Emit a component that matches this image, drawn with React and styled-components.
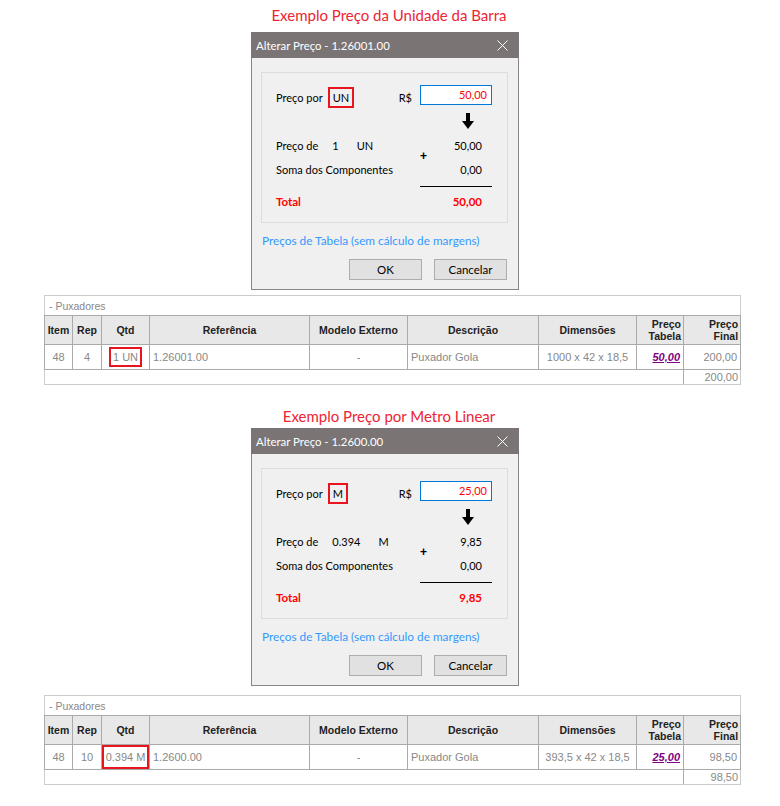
import React from "react";
import styled, { createGlobalStyle } from "styled-components";

const GlobalStyle = createGlobalStyle`
  html, body {
    margin: 0;
    padding: 0;
    background: #ffffff;
  }
  body {
    width: 780px;
    font-family: Lato, "Liberation Sans", sans-serif;
  }
`;

const examples = [
  {
    title: "Exemplo Preço da Unidade da Barra",
    code: "1.26001.00",
    unit: "UN",
    price: "50,00",
    qty: "1",
    subtotal: "50,00",
    total: "50,00",
    rep: "4",
    qtdLabel: "1 UN",
    qtdFull: false,
    dims: "1000 x 42 x 18,5",
    final: "200,00",
    titleTop: 5,
    dialogGap: 7,
    tableGap: 5,
  },
  {
    title: "Exemplo Preço por Metro Linear",
    code: "1.2600.00",
    unit: "M",
    price: "25,00",
    qty: "0.394",
    subtotal: "9,85",
    total: "9,85",
    rep: "10",
    qtdLabel: "0.394 M",
    qtdFull: true,
    dims: "393,5 x 42 x 18,5",
    final: "98,50",
    titleTop: 21,
    dialogGap: 2,
    tableGap: 9,
  },
];

const columns = [28, 29, 48, 160, 98, 131, 98, 47, 57];

export default function App() {
  return (
    <Page>
      <GlobalStyle />
      {examples.map((ex) => (
        <Example key={ex.code} ex={ex} />
      ))}
    </Page>
  );
}

function Example({ ex }) {
  return (
    <Section>
      <Title $top={ex.titleTop}>{ex.title}</Title>
      <Dialog $gap={ex.dialogGap}>
        <TitleBar>
          <span>Alterar Preço - {ex.code}</span>
          <CloseIcon />
        </TitleBar>
        <DialogBody>
          <GroupBox>
            <Cell $row={1}>
              Preço por
              <UnitMark>{ex.unit}</UnitMark>
              <Currency>R$</Currency>
            </Cell>
            <PriceInput>{ex.price}</PriceInput>

            <ArrowCell>
              <DownArrow />
            </ArrowCell>

            <Cell $row={3}>
              Preço de
              <Qty>{ex.qty}</Qty>
              <Unit>{ex.unit}</Unit>
            </Cell>
            <Value $row={3}>{ex.subtotal}</Value>

            <Cell $row={4}>Soma dos Componentes</Cell>
            <Value $row={4}>0,00</Value>

            <Plus>+</Plus>

            <Rule />

            <Cell $row={6} $total>
              Total
            </Cell>
            <Value $row={6} $total>
              {ex.total}
            </Value>
          </GroupBox>
          <TableLink>Preços de Tabela (sem cálculo de margens)</TableLink>
          <Buttons>
            <Button>OK</Button>
            <Button>Cancelar</Button>
          </Buttons>
        </DialogBody>
      </Dialog>

      <Table $gap={ex.tableGap}>
        <colgroup>
          {columns.map((w, i) => (
            <col key={i} style={{ width: w }} />
          ))}
        </colgroup>
        <tbody>
          <GroupRow>
            <td colSpan={9}>- Puxadores</td>
          </GroupRow>
          <HeadRow>
            <Th>Item</Th>
            <Th>Rep</Th>
            <Th>Qtd</Th>
            <Th>Referência</Th>
            <Th>Modelo Externo</Th>
            <Th>Descrição</Th>
            <Th>Dimensões</Th>
            <Th $right>
              Preço
              <br />
              Tabela
            </Th>
            <Th $right>
              Preço
              <br />
              Final
            </Th>
          </HeadRow>
          <DataRow>
            <Td $align="center">48</Td>
            <Td $align="center">{ex.rep}</Td>
            <Td $align="center" $marked={ex.qtdFull}>
              {ex.qtdFull ? ex.qtdLabel : <QtdMark>{ex.qtdLabel}</QtdMark>}
            </Td>
            <Td>{ex.code}</Td>
            <Td $align="center">-</Td>
            <Td>Puxador Gola</Td>
            <Td $align="center">{ex.dims}</Td>
            <Td $align="right">
              <PriceLink>{ex.price}</PriceLink>
            </Td>
            <Td $align="right">{ex.final}</Td>
          </DataRow>
          <TotalRow>
            <td colSpan={8} />
            <td>{ex.final}</td>
          </TotalRow>
        </tbody>
      </Table>
    </Section>
  );
}

function CloseIcon() {
  return (
    <svg width="11" height="11" viewBox="0 0 11 11">
      <path d="M0.5 0.5 L10.5 10.5 M10.5 0.5 L0.5 10.5" stroke="#ffffff" strokeWidth="1" />
    </svg>
  );
}

function DownArrow() {
  return (
    <svg width="12" height="16" viewBox="0 0 12 16">
      <path d="M4 0 H8 V8 H12 L6 16 L0 8 H4 Z" fill="#000000" />
    </svg>
  );
}

const Page = styled.div`
  display: flex;
  flex-direction: column;
  width: 780px;
`;

const Section = styled.section`
  display: flex;
  flex-direction: column;
`;

const Title = styled.div`
  margin-top: ${(p) => p.$top}px;
  text-align: center;
  padding-right: 2px;
  color: #ec2434;
  font-size: 15px;
  line-height: 20px;
`;

const Dialog = styled.div`
  width: 268px;
  margin: ${(p) => p.$gap}px 0 0 251px;
  background: #f0f0f0;
  font-size: 11px;
  color: #000000;
`;

const TitleBar = styled.div`
  display: flex;
  align-items: center;
  justify-content: space-between;
  height: 26px;
  padding: 0 11px 0 5px;
  background: #7a7574;
  color: #ffffff;
  font-size: 11.4px;
`;

const DialogBody = styled.div`
  display: flex;
  flex-direction: column;
  border: 1px solid #8a8585;
  border-top: none;
  padding: 14px 10px 9px 9px;
`;

const GroupBox = styled.div`
  display: grid;
  grid-template-columns: 144px 72px;
  grid-template-rows: 24px 24px 24px 25px 8px 22px;
  padding: 12px 0 10px 14px;
  border: 1px solid #dcdcdc;
`;

const Cell = styled.div`
  grid-column: 1;
  grid-row: ${(p) => p.$row};
  display: flex;
  align-items: center;
  color: ${(p) => (p.$total ? "#ff0000" : "#000000")};
  font-weight: ${(p) => (p.$total ? 700 : 400)};
  font-size: ${(p) => (p.$total ? "11.5px" : "11px")};
`;

const UnitMark = styled.span`
  display: inline-flex;
  align-items: center;
  height: 21px;
  box-sizing: border-box;
  margin-left: 5px;
  padding: 0 3px;
  border: 2px solid #e8141e;
`;

const Currency = styled.span`
  margin-left: auto;
  margin-right: 8px;
`;

const PriceInput = styled.div`
  grid-column: 2;
  grid-row: 1;
  align-self: start;
  height: 20px;
  box-sizing: border-box;
  border: 1px solid #0078d7;
  background: #ffffff;
  color: #ff0000;
  text-align: right;
  padding-right: 4px;
  line-height: 18px;
`;

const ArrowCell = styled.div`
  grid-column: 2;
  grid-row: 2;
  display: flex;
  align-items: center;
  padding-left: 42px;
`;

const Qty = styled.span`
  margin-left: 14px;
`;

const Unit = styled.span`
  margin-left: 18px;
`;

const Value = styled.div`
  grid-column: 2;
  grid-row: ${(p) => p.$row};
  display: flex;
  align-items: center;
  justify-content: flex-end;
  padding-right: 10px;
  color: ${(p) => (p.$total ? "#ff0000" : "#000000")};
  font-weight: ${(p) => (p.$total ? 700 : 400)};
  font-size: ${(p) => (p.$total ? "11.5px" : "11px")};
`;

const Plus = styled.div`
  grid-column: 2;
  grid-row: 3 / span 2;
  align-self: center;
  justify-self: start;
  margin-bottom: 3px;
  font-family: "Liberation Sans", Arial, sans-serif;
  font-weight: 700;
  font-size: 12px;
`;

const Rule = styled.div`
  grid-column: 2;
  grid-row: 5;
  align-self: center;
  height: 1px;
  background: #000000;
`;

const TableLink = styled.div`
  margin-top: 10px;
  padding-left: 1px;
  line-height: 16px;
  font-size: 11.8px;
  color: #3399ff;
`;

const Buttons = styled.div`
  display: flex;
  justify-content: flex-end;
  gap: 12px;
  margin: 10px 1px 0 0;
`;

const Button = styled.button`
  width: 73px;
  height: 21px;
  padding: 0;
  background: #e1e1e1;
  border: 1px solid #adadad;
  font-family: Lato, "Liberation Sans", sans-serif;
  font-size: 11.5px;
  color: #000000;
`;

const Table = styled.table`
  margin: ${(p) => p.$gap}px 0 0 44px;
  width: 696px;
  table-layout: fixed;
  border-collapse: collapse;
  border: 1px solid #cccccc;
  font-family: "Liberation Sans", Arial, sans-serif;
  font-size: 11px;
  color: #888888;
`;

const GroupRow = styled.tr`
  height: 20px;
  td {
    padding: 0 4px;
    font-size: 10.5px;
    color: #888888;
    border-bottom: 1px solid #aaaaaa;
  }
`;

const HeadRow = styled.tr`
  height: 29px;
  background: #e8e8e8;
`;

const Th = styled.th`
  border: 1px solid #aaaaaa;
  padding: 0 2px;
  font-size: 10.5px;
  line-height: 12px;
  font-weight: 700;
  color: #222222;
  text-align: ${(p) => (p.$right ? "right" : "center")};
  white-space: nowrap;
  overflow: hidden;
`;

const DataRow = styled.tr`
  height: 25px;
`;

const Td = styled.td`
  border: 1px solid #aaaaaa;
  padding: 0 3px;
  text-align: ${(p) => p.$align || "left"};
  white-space: nowrap;
  overflow: hidden;
  box-shadow: ${(p) => (p.$marked ? "inset 0 0 0 2px #e8141e" : "none")};
`;

const QtdMark = styled.span`
  display: inline-block;
  padding: 1px 2px;
  border: 2px solid #e8141e;
  line-height: 14px;
`;

const PriceLink = styled.span`
  color: #800080;
  font-weight: 700;
  font-style: italic;
  text-decoration: underline;
`;

const TotalRow = styled.tr`
  height: 15px;
  td {
    padding: 0 2px;
    line-height: 13px;
    text-align: right;
    border-bottom: 1px solid #cccccc;
  }
  td:first-child {
    border-right: 1px solid #aaaaaa;
  }
`;
